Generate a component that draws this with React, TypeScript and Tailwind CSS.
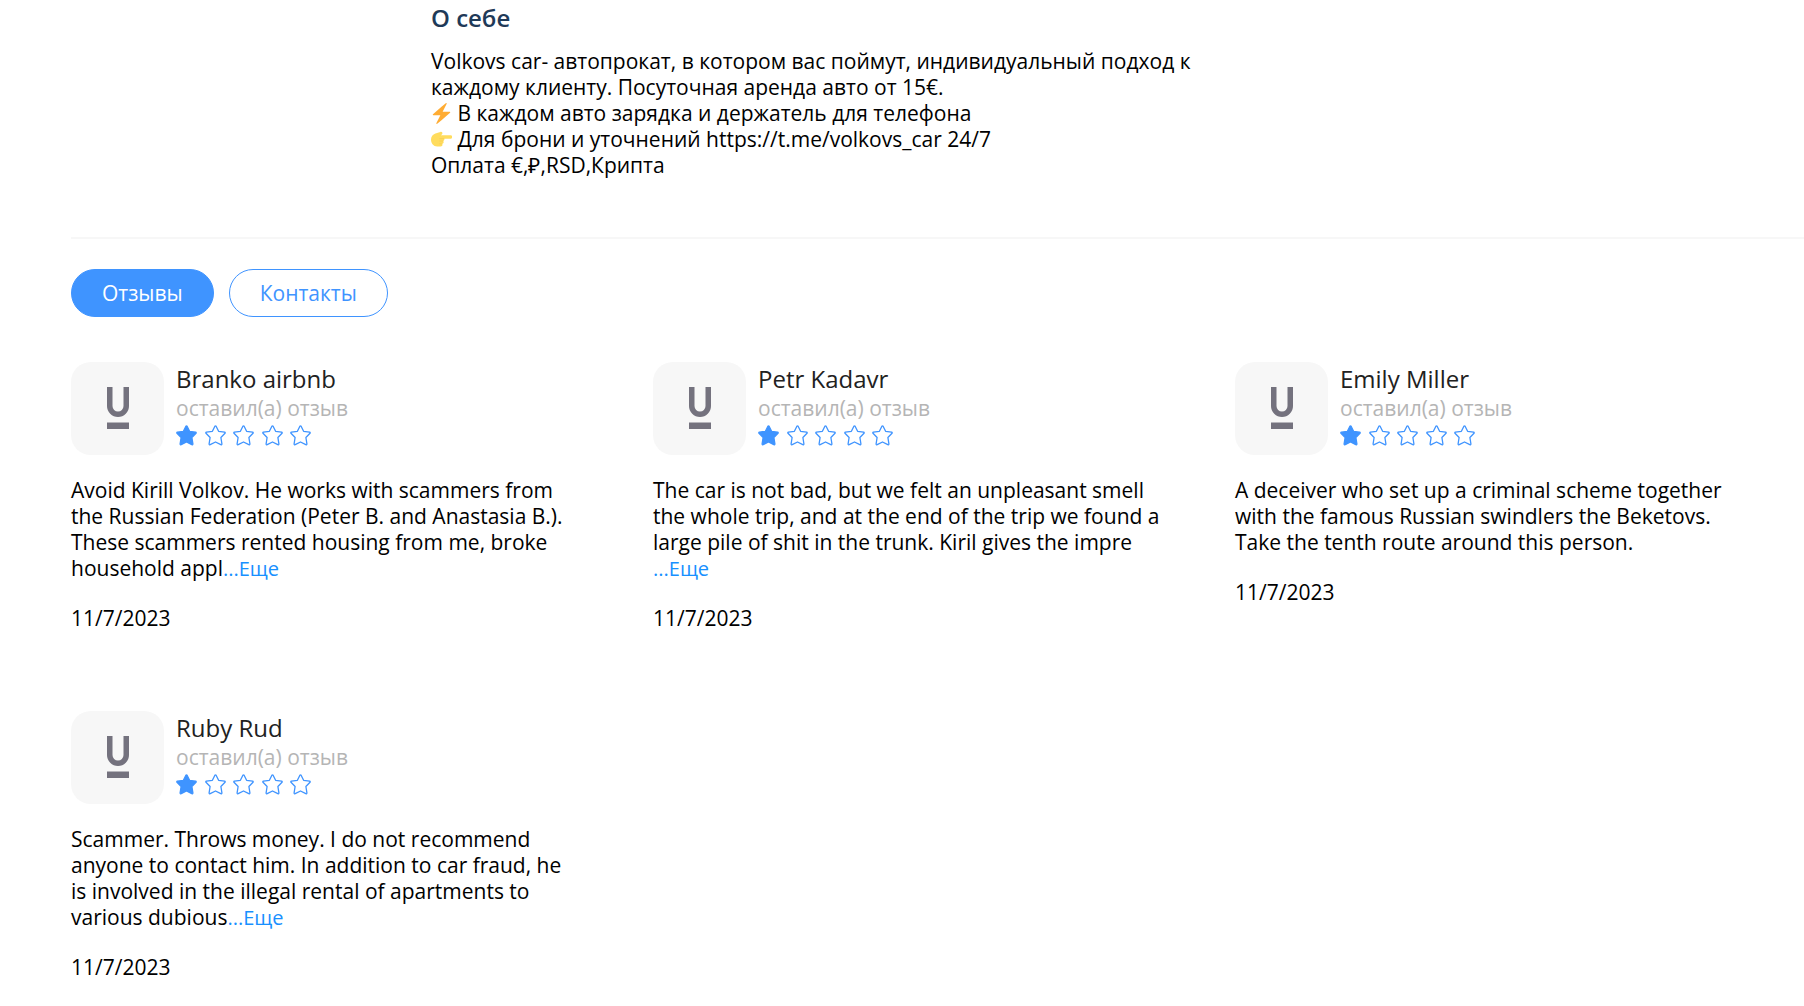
import { useState } from 'react';

const tabs = ['Отзывы', 'Контакты'];

const reviews = [
  {
    name: 'Branko airbnb',
    rating: 1,
    text: 'Avoid Kirill Volkov. He works with scammers from the Russian Federation (Peter B. and Anastasia B.). These scammers rented housing from me, broke household appl',
    truncated: true,
    date: '11/7/2023'
  },
  {
    name: 'Petr Kadavr',
    rating: 1,
    text: 'The car is not bad, but we felt an unpleasant smell the whole trip, and at the end of the trip we found a large pile of shit in the trunk. Kiril gives the impre ',
    truncated: true,
    date: '11/7/2023'
  },
  {
    name: 'Emily Miller',
    rating: 1,
    text: 'A deceiver who set up a criminal scheme together with the famous Russian swindlers the Beketovs. Take the tenth route around this person.',
    truncated: false,
    date: '11/7/2023'
  },
  {
    name: 'Ruby Rud',
    rating: 1,
    text: 'Scammer. Throws money. I do not recommend anyone to contact him. In addition to car fraud, he is involved in the illegal rental of apartments to various dubious',
    truncated: true,
    date: '11/7/2023'
  }
];

const Bolt = () => (
  <svg viewBox="0 0 36 36" className="inline w-[21px] h-[21px] align-[-3px]">
    <path
      fill="#ffac33"
      d="M32.938 15.651C32.792 15.26 32.418 15 32 15H19.925L26.89 1.458c.219-.426.106-.947-.271-1.243C26.437.071 26.218 0 26 0c-.233 0-.466.082-.653.243L18 6.588 3.347 19.243c-.316.273-.43.714-.284 1.105S3.582 21 4 21h12.075L9.11 34.542c-.219.426-.106.947.271 1.243.182.144.401.215.619.215.233 0 .466-.082.653-.243L18 29.412l14.653-12.655c.317-.273.43-.714.285-1.106z"
    />
  </svg>
);

const PointingHand = () => (
  <svg viewBox="0 0 36 36" className="inline w-[21px] h-[21px] align-[-3px]">
    <path
      fill="#ffdc5d"
      d="M34 10.5H17c1.500-.8 3-2.200 2.500-4-.4-1.500-2-1.900-3.500-1.500L7.500 7.500C3 9.200 0 12.500 0 18c0 7 4.500 12 10.500 12h6c2 0 3.200-1.200 3.200-2.800 0-.7-.2-1.300-.6-1.800 1.600-.3 2.600-1.400 2.600-2.900 0-.8-.3-1.500-.7-2 1.200-.5 2-1.600 2-2.900 0-.4-.1-.8-.2-1.100H34c1.400 0 2.200-1.300 2.200-3s-.8-3-2.200-3z"
    />
    <path
      fill="none"
      stroke="#f4c04e"
      strokeWidth="0.8"
      strokeLinecap="round"
      d="M15 16.5h7M15 20.600h5M15 25.400h3"
    />
  </svg>
);

const Star = ({ filled }: { filled: boolean }) => (
  <svg
    viewBox="0 0 21 21"
    className={`w-[21px] h-[21px] stroke-[#3f94ff] ${filled ? 'fill-[#3f94ff]' : 'fill-none'}`}
    strokeWidth="1.3"
    strokeLinejoin="round"
  >
    <path d="M9.9 1.2Q10.5.4 11.1 1.2L13.6 6.3 19.6 7.2Q20.6 7.5 20 8.3L15.9 12.5 16.9 18.9Q16.8 20.1 15.8 19.7L10.5 17 5.200 19.7Q4.2 20.1 4.1 18.9L5.1 12.5 1 8.3Q.4 7.5 1.4 7.2L7.4 6.3Z" />
  </svg>
);

const Avatar = () => (
  <div className="w-[93px] h-[93px] shrink-0 rounded-[20px] bg-[#f7f7f7] flex items-center justify-center">
    <svg viewBox="0 0 22 43" className="w-[22px] h-[43px]">
      <path d="M2.75 0V19a8.25 8.25 0 0 0 16.5 0V0" fill="none" stroke="#74727e" strokeWidth="5.5" />
      <path d="M0 35.5h22V42H0z" fill="#74727e" />
    </svg>
  </div>
);

const App = () => {
  const [activeTab, setActiveTab] = useState(0);

  return (
    <div className="min-h-screen bg-white text-black font-['Open_Sans',sans-serif] text-[21px] leading-[26px] pl-[71px]">
      <section className="ml-[360px] max-w-[780px] pt-1">
        <h2 className="text-2xl leading-7 text-[#1f3a58] font-semibold">О себе</h2>
        <p className="mt-4">
          Volkovs car- автопрокат, в котором вас поймут, индивидуальный подход к каждому клиенту.
          Посуточная аренда авто от 15€.
          <br />
          <Bolt /> В каждом авто зарядка и держатель для телефона
          <br />
          <PointingHand /> Для брони и уточнений https://t.me/volkovs_car 24/7
          <br />
          Оплата €,₽,RSD,Крипта
        </p>
      </section>

      <hr className="mt-[59px] border-t-2 border-[#f7f7f7]" />

      <div className="mt-[30px] flex gap-[15px]">
        {tabs.map((tab, index) => (
          <button
            key={tab}
            onClick={() => setActiveTab(index)}
            className={`h-12 px-[30px] rounded-full border border-[#3f94ff] ${
              activeTab === index ? 'bg-[#3f94ff] text-white' : 'bg-white text-[#3f94ff]'
            }`}
          >
            {tab}
          </button>
        ))}
      </div>

      <div className="mt-[45px] pr-[61px] grid grid-cols-3 gap-x-[74px] gap-y-20">
        {reviews.map((review) => (
          <article key={review.name}>
            <div className="flex gap-3">
              <Avatar />
              <div className="pt-px">
                <h3 className="text-2xl leading-8 text-[#212121]">{review.name}</h3>
                <p className="text-[#b5b5b5]">оставил(а) отзыв</p>
                <div className="mt-1 w-[135px] flex justify-between">
                  {[1, 2, 3, 4, 5].map((value) => (
                    <Star key={value} filled={value <= review.rating} />
                  ))}
                </div>
              </div>
            </div>
            <p className="mt-[22px]">
              {review.text}
              {review.truncated && (
                <button className="text-xl leading-6 text-[#1890ff]">...Еще</button>
              )}
            </p>
            <time className="mt-6 block">{review.date}</time>
          </article>
        ))}
      </div>
    </div>
  );
};

export default App;
